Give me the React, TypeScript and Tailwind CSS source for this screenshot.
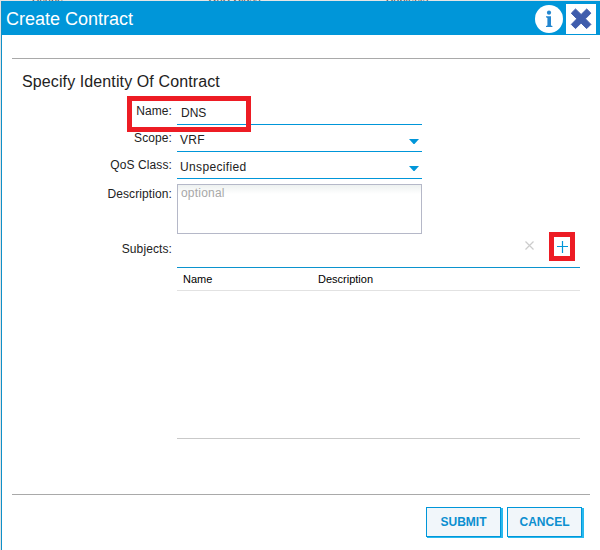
import type { ReactNode } from "react";

function Row({ label, height, labelTop, children }: { label: string; height: string; labelTop: string; children?: ReactNode }) {
  return (
    <div className={`flex ${height}`}>
      <label className={`w-[172px] shrink-0 pr-px text-right text-[12px] leading-[14px] tracking-[0.1px] ${labelTop}`}>{label}</label>
      <div className="ml-[4px] w-[245px]">{children}</div>
    </div>
  );
}

function Select({ value }: { value: string }) {
  return (
    <div className="flex h-full justify-between border-b border-[#0096d9] pl-[3px] pr-[3px] pt-[8px] text-[12px] leading-[14px] tracking-[0.35px]">
      <span>{value}</span>
      <svg className="mt-[6px]" width="10" height="6" viewBox="0 0 10 6">
        <path d="M0 0h10L5.5 5h-1z" fill="#0096d9" />
      </svg>
    </div>
  );
}

function Button({ children, className }: { children: ReactNode; className: string }) {
  return (
    <button className={`h-[30px] w-[75px] border border-[#0096d9] bg-[#f1f6fa] text-[12px] font-bold leading-[28px] text-[#0b8fd0] shadow-[1px_1px_0_#29b9ee,2px_1px_0_#29b9ee] ${className}`}>
      {children}
    </button>
  );
}

export default function App() {
  return (
    <div className="h-[550px] w-[600px] overflow-hidden border-l border-[#e3e3e3] bg-white font-['Liberation_Sans',Arial,sans-serif] text-[#222]">
      <div className="flex h-px items-end overflow-hidden bg-[#e5e5e5] pl-[31px] text-[11px] leading-[6px] text-[#555]">
        <span className="w-[176px] shrink-0">Scope</span>
        <span className="w-[178px] shrink-0">QoS Class</span>
        <span>Subjects</span>
      </div>
      <div className="relative flex h-[549px] flex-col border-l border-[#1090c8]">
        <header className="flex h-[34px] shrink-0 bg-[#0096d9]">
          <h1 className="flex-1 pl-[4px] pt-px text-[18px] leading-[34px] text-white">Create Contract</h1>
          <svg className="mt-[4px]" width="28" height="28" viewBox="0 0 28 28">
            <circle cx="14" cy="14" r="14" fill="white" />
            <circle cx="14" cy="7.7" r="2.1" fill="#2386cf" />
            <path d="M11 11.3h5v9.2l1.4.6v.9h-6.4v-.9l1.4-.6v-7.4l-1.4-.8z" fill="#2386cf" />
          </svg>
          <svg className="ml-[3px] mr-[4px] mt-[3px]" width="30" height="30" viewBox="0 0 30 30">
            <path d="M0 0h30v30H0z" fill="white" />
            <path d="M5.3 9.2L9.5 5l5.6 5.5L20.7 5l4.2 4.2-5.5 5.6 5.5 5.6-4.2 4.2-5.6-5.5-5.6 5.5-4.2-4.2 5.5-5.6z" fill="#405dac" stroke="#405dac" strokeLinejoin="round" />
          </svg>
        </header>
        <section className="ml-[10px] mr-[10px] mt-[23px] h-[437px] border-b border-t border-[#a9a9a9]">
          <h2 className="ml-[10px] mt-[13px] h-[26px] text-[16px] leading-[20px] tracking-[0.11px]">Specify Identity Of Contract</h2>
          <div className="-ml-[11px]">
            <Row label="Name:" height="h-[27px]" labelTop="pt-[6px]">
              <div className="h-full border-b border-[#0096d9] pl-[4px] pt-[8px] text-[12px] leading-[14px]">DNS</div>
            </Row>
            <Row label="Scope:" height="h-[27px]" labelTop="pt-[6px]"><Select value="VRF" /></Row>
            <Row label="QoS Class:" height="h-[27px]" labelTop="pt-[6px]"><Select value="Unspecified" /></Row>
            <Row label="Description:" height="h-[55px]" labelTop="pt-[8px]">
              <textarea placeholder="optional" className="mt-[5px] block h-[50px] w-full resize-none border border-[#b5b8c8] bg-gradient-to-b from-[#edf1f0] to-white to-[9px] px-[3px] py-px text-[12px] leading-[14px] tracking-[0.2px] placeholder:text-[#a8a8a8]" />
            </Row>
            <div className="flex h-[33px]">
              <span className="w-[172px] pr-px pt-[8px] text-right text-[12px] leading-[14px] tracking-[0.1px]">Subjects:</span>
              <svg className="ml-[352px] mt-[7px]" width="9" height="9" viewBox="0 0 9 9"><path d="M.5 .5L8.5 8.5M8.5 .5L.5 8.5" stroke="#ccc" strokeWidth="1.2" /></svg>
            </div>
            <div className="ml-[176px] h-[172px] w-[403px] border-b border-t border-b-[#c9c9c9] border-t-[#0b93ce] text-[11px] leading-[22px] text-black">
              <div className="flex h-[23px] border-b border-[#e2e2e2] pl-[6px]">
                <span className="w-[135px]">Name</span><span>Description</span>
              </div>
            </div>
          </div>
        </section>
        <footer className="flex justify-end pr-[18px] pt-[12px]">
          <Button className="mr-[6px]">SUBMIT</Button>
          <Button className="">CANCEL</Button>
        </footer>
        <div className="absolute left-[125px] top-[95px] h-[36px] w-[124px] border-[5px] border-[#ed1c24]" />
        <div className="absolute left-[547px] top-[231px] h-[29px] w-[26px] border-[5px] border-[#ed1c24]">
          <svg width="16" height="19" viewBox="0 0 16 19"><path d="M3 9.5h11M8.5 4v12" stroke="#0096d9" strokeWidth="1.2" /></svg>
        </div>
      </div>
    </div>
  );
}
